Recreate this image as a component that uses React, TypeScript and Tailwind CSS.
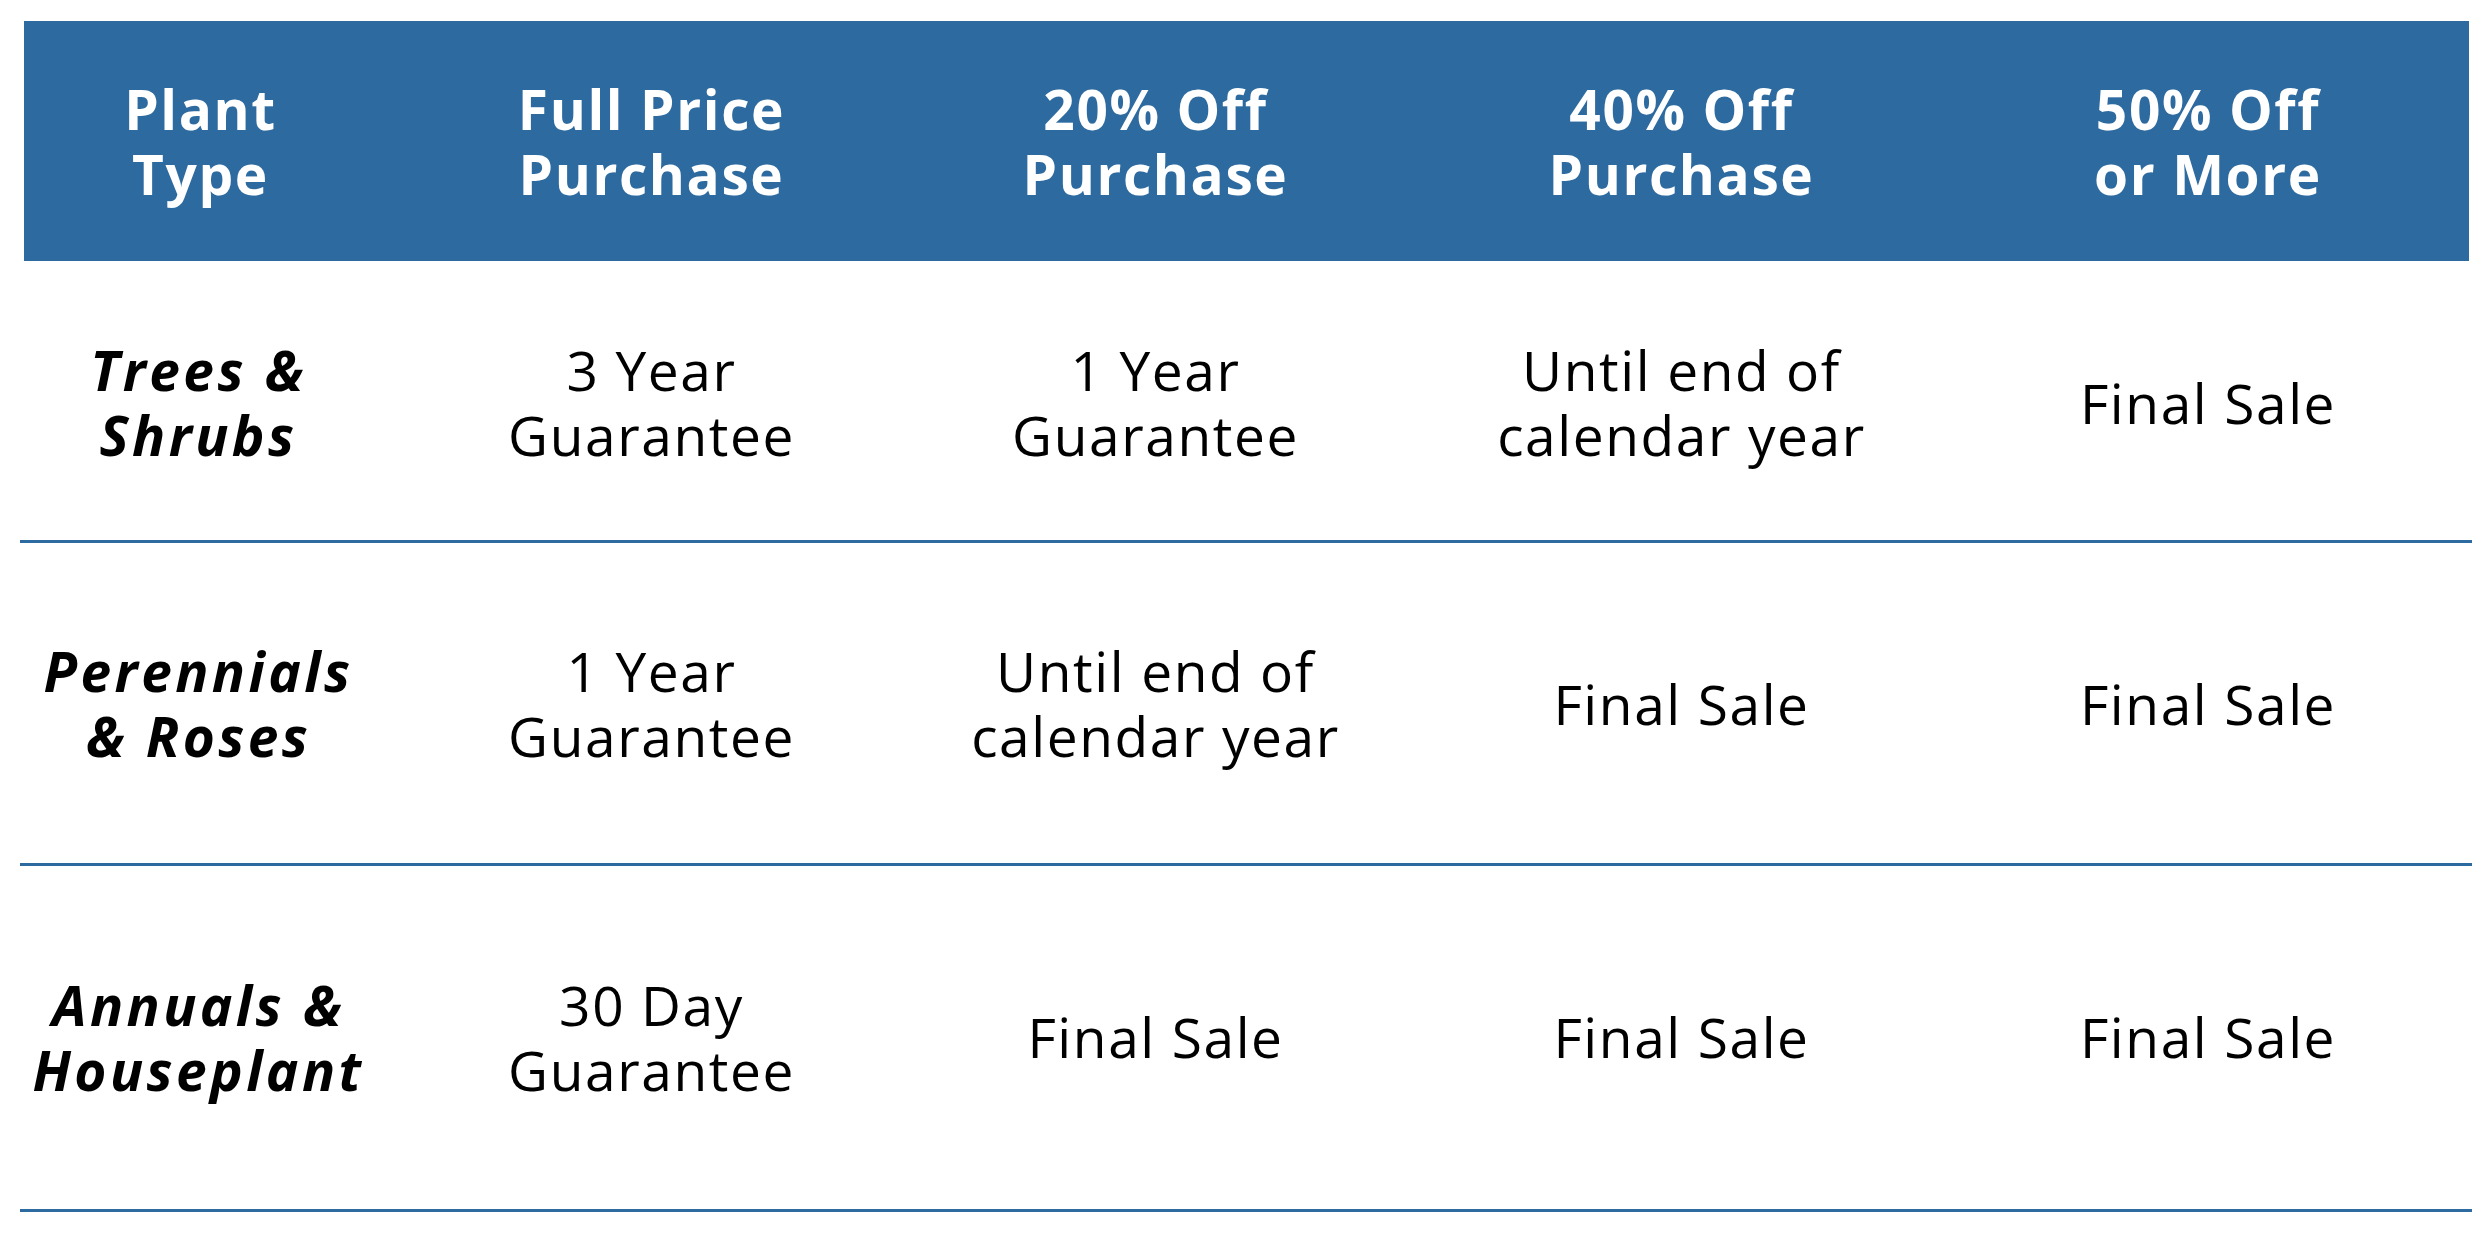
const headers = [
  ['Plant', 'Type'],
  ['Full Price', 'Purchase'],
  ['20% Off', 'Purchase'],
  ['40% Off', 'Purchase'],
  ['50% Off', 'or More'],
]

type Row = {
  plant: string[]
  cells: string[][]
  height: string
  pad: string
}

const rows: Row[] = [
  {
    plant: ['Trees &', 'Shrubs'],
    cells: [['3 Year', 'Guarantee'], ['1 Year', 'Guarantee'], ['Until end of', 'calendar year'], ['Final Sale']],
    height: 'h-[282px]',
    pad: 'pt-[3px]',
  },
  {
    plant: ['Perennials', '& Roses'],
    cells: [['1 Year', 'Guarantee'], ['Until end of', 'calendar year'], ['Final Sale'], ['Final Sale']],
    height: 'h-[323px]',
    pad: 'pt-0',
  },
  {
    plant: ['Annuals &', 'Houseplant'],
    cells: [['30 Day', 'Guarantee'], ['Final Sale'], ['Final Sale'], ['Final Sale']],
    height: 'h-[346px]',
    pad: 'pb-[2px]',
  },
]

const Lines = ({ lines }: { lines: string[] }) => (
  <div className="flex flex-col items-center text-center">
    {lines.map((line) => (
      <span key={line} className="whitespace-nowrap">
        {line}
      </span>
    ))}
  </div>
)

export default function App() {
  return (
    <div className="min-h-screen bg-white px-[20px] pt-[21px] font-['Open_Sans',sans-serif] text-[55px] leading-[65px] tracking-[1.6px] text-black">
      <div className="ml-[4px] mr-[3px] grid h-[240px] grid-cols-[353px_549px_459px_593px_1fr] items-center bg-[#2d6a9f] pr-[31px] font-bold tracking-[1.6px] text-white">
        {headers.map((h) => (
          <Lines key={h.join()} lines={h} />
        ))}
      </div>

      {rows.map((row) => (
        <div
          key={row.plant.join()}
          className={`grid grid-cols-[357px_549px_459px_593px_1fr] items-center border-b-[3px] border-[#2d6a9f] pr-[34px] ${row.height} ${row.pad}`}
        >
          <div className="font-bold italic tracking-[3.4px]">
            <Lines lines={row.plant} />
          </div>
          {row.cells.map((cell, i) => (
            <Lines key={i} lines={cell} />
          ))}
        </div>
      ))}
    </div>
  )
}
